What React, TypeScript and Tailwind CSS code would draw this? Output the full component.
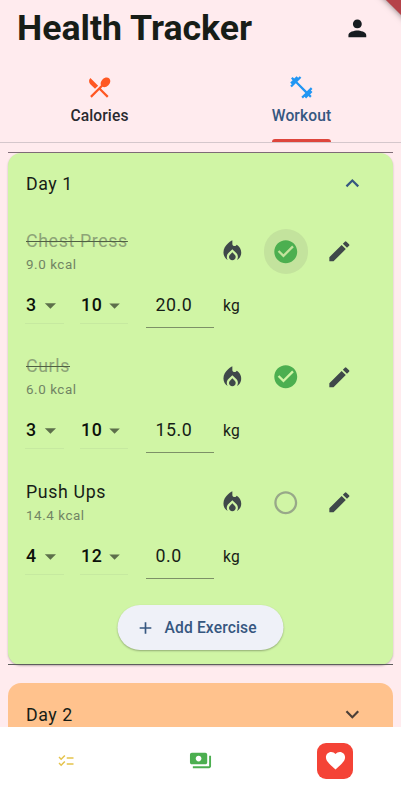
import React from "react";
import {
  MdAdd,
  MdArrowDropDown,
  MdCheckCircle,
  MdChecklist,
  MdEdit,
  MdExpandLess,
  MdExpandMore,
  MdFavorite,
  MdFitnessCenter,
  MdLocalFireDepartment,
  MdPayments,
  MdPerson,
  MdRadioButtonUnchecked,
  MdRestaurantMenu,
} from "react-icons/md";

type Exercise = {
  name: string;
  kcal: string;
  sets: number;
  reps: number;
  weight: string;
  done: boolean;
  pressed?: boolean;
};

const exercises: Exercise[] = [
  { name: "Chest Press", kcal: "9.0", sets: 3, reps: 10, weight: "20.0", done: true, pressed: true },
  { name: "Curls", kcal: "6.0", sets: 3, reps: 10, weight: "15.0", done: true },
  { name: "Push Ups", kcal: "14.4", sets: 4, reps: 12, weight: "0.0", done: false },
];

const Dropdown: React.FC<{ value: number; className: string }> = ({ value, className }) => (
  <button className={`flex h-[37px] items-center justify-between border-b border-[#c6e9a0] pt-px pl-px font-medium text-[#0c110a] ${className}`}>
    {value}
    <MdArrowDropDown className="mr-[0.5px] size-[27px] text-[#5d6f4b]" />
  </button>
);

const ExerciseRow: React.FC<{ exercise: Exercise }> = ({ exercise }) => {
  const { name, kcal, sets, reps, weight, done, pressed } = exercise;

  return (
    <div className="h-[125.5px]">
      <div className="flex h-[60px] items-center">
        <div className="w-[179px] pt-[2px] pl-[18px]">
          <div className="h-6 text-[17.8px] leading-6 tracking-[0.62px]">
            <span className={done ? "text-[#8da477] line-through decoration-[#4f5f43] decoration-[1.3px]" : ""}>{name}</span>
          </div>
          <div className="h-6 text-[13.4px] leading-6 text-[#718464]">{kcal} kcal</div>
        </div>
        <div className="flex gap-[9px] pl-[23px] text-[#3f484a]">
          <button className="flex size-[44.6px] items-center justify-center">
            <MdLocalFireDepartment className="size-[26.7px]" />
          </button>
          <button className={`flex size-[44.6px] items-center justify-center rounded-full ${pressed ? "bg-[#c3e39d]" : ""}`}>
            {done ? (
              <MdCheckCircle className="size-[27.5px] text-[#4caf50]" />
            ) : (
              <MdRadioButtonUnchecked className="size-[27.5px] text-[#98a889]" />
            )}
          </button>
          <button className="flex size-[44.6px] items-center justify-center">
            <MdEdit className="size-[26.7px]" />
          </button>
        </div>
      </div>
      <div className="flex h-[46px] items-start pt-[5px] pl-[17px] text-[17.8px]">
        <Dropdown value={sets} className="w-[39px]" />
        <Dropdown value={reps} className="ml-4 w-12" />
        <div className="ml-[18px] flex h-[41px] w-[67.5px] items-center border-b border-[#7d9067] pb-[3px] pl-[9.5px]">{weight}</div>
        <span className="ml-[9.5px] flex h-[39px] items-center pt-px text-[15.6px] tracking-[0.3px]">kg</span>
      </div>
    </div>
  );
};

export default function App() {
  return (
    <div className="relative flex h-[800px] w-[401px] flex-col overflow-hidden bg-[#ffebee] font-[Roboto,sans-serif] text-[#171d17]">
      {/* corner ribbon */}
      <div className="absolute -top-[29px] -right-[42px] h-[34px] w-[90px] rotate-45 bg-[#b54249] shadow-[0_0_6px_rgba(0,0,0,0.5)]" />

      <header className="flex h-[56px] items-center justify-between pr-[30px] pl-[17px]">
        <h1 className="pt-[2px] text-[35.7px] leading-none font-bold">Health Tracker</h1>
        <MdPerson className="size-[26.7px] text-[#171c20]" />
      </header>

      <nav className="flex h-[87px] shrink-0 border-b border-[#d5c7cc] text-[15.6px] font-medium tracking-[0.1px]">
        <div className="flex w-[199px] flex-col items-center pt-[18px]">
          <MdRestaurantMenu className="size-[26.7px] text-[#ff5722]" />
          <span className="mt-[3px] leading-6 text-[#292a30]">Calories</span>
        </div>
        <div className="flex flex-1 flex-col items-center pt-[18px] pl-[3px]">
          <MdFitnessCenter className="size-[26.7px] text-[#2196f3]" />
          <span className="mt-[3px] leading-6 text-[#365780]">Workout</span>
          <div className="mt-auto h-[3px] w-[59px] rounded-t-[3px] bg-[#de463c]" />
        </div>
      </nav>

      <main className="flex-1 overflow-hidden px-2 pt-[8.5px] tracking-[0.56px]">
        <div className="h-px bg-[#806d78]" />
        <section className="h-[512px] rounded-[13px] bg-[#d0f5a5] shadow-[0_1px_2px_rgba(0,0,0,0.25)]">
          <div className="flex h-[69px] items-start justify-between pt-[17px] pr-[27px] pl-[18px] text-[17.8px] leading-[27px]">
            Day 1
            <MdExpandLess className="size-[26.7px] text-[#365780]" />
          </div>
          {exercises.map((e) => (
            <ExerciseRow key={e.name} exercise={e} />
          ))}
          <button className="mx-auto mt-[7px] flex h-[45px] w-[166px] -translate-x-[0.5px] items-center rounded-full bg-[#eff1f8] pl-[18px] text-[15.6px] font-medium tracking-[0.15px] text-[#365780] shadow-[0_1px_2px_rgba(0,0,0,0.3)]">
            <MdAdd className="size-5" />
            <span className="ml-[9.5px] pt-[2px]">Add Exercise</span>
          </button>
        </section>
        <div className="relative -mt-px h-px bg-[#5d5d5d]" />
        <section className="mt-[18px] flex h-[65px] items-start justify-between rounded-[13px] bg-[#ffc28d] pt-[18px] pr-[27px] pl-[18px] text-[17.8px] leading-[27px]">
          Day 2
          <MdExpandMore className="size-[26.7px] text-[#4b3f37]" />
        </section>
      </main>

      <footer className="flex h-[73px] shrink-0 items-start justify-between bg-white px-[48px] pt-[15.5px]">
        <div className="flex size-9 items-center justify-center">
          <MdChecklist className="size-[18px] text-[#e5c34b]" />
        </div>
        <div className="flex size-9 items-center justify-center">
          <MdPayments className="size-[23px] text-[#4caf50]" />
        </div>
        <div className="flex size-9 items-center justify-center rounded-[9px] bg-[#f44336]">
          <MdFavorite className="size-[23px] text-white" />
        </div>
      </footer>
    </div>
  );
}
